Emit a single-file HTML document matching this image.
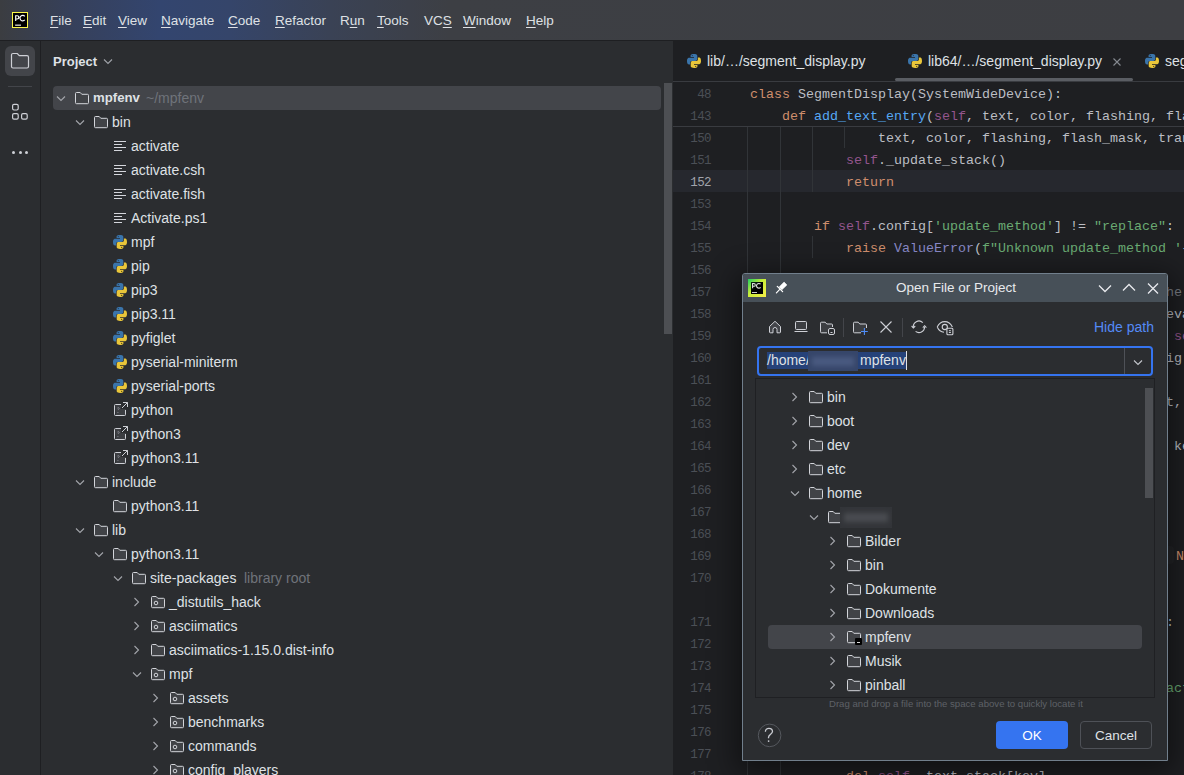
<!DOCTYPE html><html><head><meta charset="utf-8"><style>
*{margin:0;padding:0;box-sizing:border-box}
html,body{width:1184px;height:775px;overflow:hidden;background:#1e1f22;font-family:"Liberation Sans",sans-serif}
.a{position:absolute}
.ic{position:absolute;overflow:visible}
.t{position:absolute;white-space:pre;font-size:14px;color:#dfe1e5;line-height:24px;height:24px}
.mn{position:absolute;white-space:pre;font-size:13.5px;color:#dfe1e5;line-height:40px;top:1px}
.mn u{text-decoration:underline;text-underline-offset:1.5px;text-decoration-thickness:1px}
.code{position:absolute;white-space:pre;font-family:"Liberation Mono",monospace;font-size:13.33px;line-height:22px;height:22px;color:#bcbec4;padding-top:1.5px}
.ln{position:absolute;white-space:pre;font-family:"Liberation Mono",monospace;font-size:12.5px;letter-spacing:-.6px;line-height:22px;height:22px;color:#4b4f56;text-align:right;width:61px;padding-top:1px}
.kw{color:#cf8e6d}.sf{color:#94558d}.fn{color:#56a8f5}.st{color:#6aab73}.bi{color:#8888c6}.cm{color:#7a7e85}
</style></head><body>

<div class="a" style="left:0;top:0;width:1184px;height:40px;background:linear-gradient(90deg,#3b3d41 0px,#36405a 70px,#33456f 160px,#35456a 230px,#3a4255 330px,#3d3f44 450px,#3d3e42 1184px)"></div>
<div class="a" style="left:0;top:40px;width:1184px;height:1px;background:#1e1f22"></div>
<svg class="ic" style="left:12px;top:12px" width="16" height="16" viewBox="0 0 16 16"><rect x=".5" y=".5" width="15" height="15" fill="#000" stroke="#fcf84a"/><path d="M3.7 9.1V3.7h1.5a1.65 1.65 0 0 1 0 3.3H3.7M12.8 4.3A2.75 2.75 0 1 0 12.8 7.9" fill="none" stroke="#fff" stroke-width="1.15"/><rect x="3.1" y="12.6" width="5.9" height="1.1" fill="#fff"/></svg>
<div class="mn" style="left:50px"><u>F</u>ile</div>
<div class="mn" style="left:83px"><u>E</u>dit</div>
<div class="mn" style="left:118px"><u>V</u>iew</div>
<div class="mn" style="left:161px"><u>N</u>avigate</div>
<div class="mn" style="left:228px"><u>C</u>ode</div>
<div class="mn" style="left:275px"><u>R</u>efactor</div>
<div class="mn" style="left:340px">R<u>u</u>n</div>
<div class="mn" style="left:377px"><u>T</u>ools</div>
<div class="mn" style="left:424px">VC<u>S</u></div>
<div class="mn" style="left:463px"><u>W</u>indow</div>
<div class="mn" style="left:526px"><u>H</u>elp</div>
<div class="a" style="left:0;top:41px;width:40px;height:734px;background:#2b2d30"></div>
<div class="a" style="left:40px;top:41px;width:1px;height:734px;background:#1e1f22"></div>
<div class="a" style="left:5px;top:46px;width:30px;height:30px;border-radius:6px;background:#43454a"></div>
<svg class="ic" style="left:10px;top:51px" width="20" height="20" viewBox="0 0 20 20"><path d="M1.5 4a1.5 1.5 0 0 1 1.5-1.5h4.3l2 2.2H17a1.5 1.5 0 0 1 1.5 1.5v9.3a1.5 1.5 0 0 1-1.5 1.5H3a1.5 1.5 0 0 1-1.5-1.5z" fill="none" stroke="#ced0d6" stroke-width="1.2"/></svg>
<div class="a" style="left:8px;top:86px;width:24px;height:1px;background:#43454a"></div>
<svg class="ic" style="left:10px;top:102px" width="20" height="20" viewBox="0 0 20 20"><rect x="2.6" y="2.4" width="5.6" height="5.6" rx="1.4" fill="none" stroke="#ced0d6" stroke-width="1.2"/><rect x="2.6" y="11.6" width="5.6" height="5.6" rx="1.4" fill="none" stroke="#ced0d6" stroke-width="1.2"/><rect x="11.6" y="11.6" width="5.6" height="5.6" rx="1.4" fill="none" stroke="#ced0d6" stroke-width="1.2"/></svg>
<div class="a" style="left:12.0px;top:150.5px;width:3px;height:3px;border-radius:50%;background:#ced0d6"></div>
<div class="a" style="left:18.5px;top:150.5px;width:3px;height:3px;border-radius:50%;background:#ced0d6"></div>
<div class="a" style="left:25.0px;top:150.5px;width:3px;height:3px;border-radius:50%;background:#ced0d6"></div>
<div class="a" style="left:41px;top:41px;width:632px;height:734px;background:#2b2d30"></div>
<div class="t" style="left:53px;top:50px;font-weight:bold;font-size:13px">Project</div>
<svg class="ic" style="left:100px;top:53px" width="16" height="16" viewBox="0 0 16 16"><path d="M4 6.5l4 4 4-4" fill="none" stroke="#9fa2a8" stroke-width="1.1"/></svg>
<div class="a" style="left:53px;top:86px;width:608px;height:24px;border-radius:4px;background:#43454a"></div>
<div class="a" style="left:664px;top:83px;width:8px;height:251px;background:#4d4f53"></div>
<svg class="ic" style="left:53px;top:90px" width="16" height="16" viewBox="0 0 16 16"><path d="M4 6.5l4 4 4-4" fill="none" stroke="#a3a5ab" stroke-width="1.1"/></svg>
<svg class="ic" style="left:74px;top:90px" width="16" height="16" viewBox="0 0 16 16"><path d="M1.5 3.5a1 1 0 0 1 1-1h3.7l1.6 1.8h5.7a1 1 0 0 1 1 1v7.4a1 1 0 0 1-1 1h-11a1 1 0 0 1-1-1z" fill="#414347" stroke="#d3d5da" stroke-width="1"/></svg>
<div class="t" style="left:93px;top:86px;font-weight:bold;font-size:13.2px;">mpfenv</div>
<div class="t" style="left:146px;top:86px;color:#6f737a">~/mpfenv</div>
<svg class="ic" style="left:72px;top:114px" width="16" height="16" viewBox="0 0 16 16"><path d="M4 6.5l4 4 4-4" fill="none" stroke="#a3a5ab" stroke-width="1.1"/></svg>
<svg class="ic" style="left:93px;top:114px" width="16" height="16" viewBox="0 0 16 16"><path d="M1.5 3.5a1 1 0 0 1 1-1h3.7l1.6 1.8h5.7a1 1 0 0 1 1 1v7.4a1 1 0 0 1-1 1h-11a1 1 0 0 1-1-1z" fill="#414347" stroke="#d3d5da" stroke-width="1"/></svg>
<div class="t" style="left:112px;top:110px;">bin</div>
<svg class="ic" style="left:112px;top:138px" width="16" height="16" viewBox="0 0 16 16"><path d="M2 3.5h12M2 6.5h8M2 9.5h12M2 12.5h8" stroke="#d4d6dc" stroke-width="1.1"/></svg>
<div class="t" style="left:131px;top:134px;">activate</div>
<svg class="ic" style="left:112px;top:162px" width="16" height="16" viewBox="0 0 16 16"><path d="M2 3.5h12M2 6.5h8M2 9.5h12M2 12.5h8" stroke="#d4d6dc" stroke-width="1.1"/></svg>
<div class="t" style="left:131px;top:158px;">activate.csh</div>
<svg class="ic" style="left:112px;top:186px" width="16" height="16" viewBox="0 0 16 16"><path d="M2 3.5h12M2 6.5h8M2 9.5h12M2 12.5h8" stroke="#d4d6dc" stroke-width="1.1"/></svg>
<div class="t" style="left:131px;top:182px;">activate.fish</div>
<svg class="ic" style="left:112px;top:210px" width="16" height="16" viewBox="0 0 16 16"><path d="M2 3.5h12M2 6.5h8M2 9.5h12M2 12.5h8" stroke="#d4d6dc" stroke-width="1.1"/></svg>
<div class="t" style="left:131px;top:206px;">Activate.ps1</div>
<svg class="ic" style="left:112px;top:234px" width="16" height="16" viewBox="0 0 16 16"><path d="M7.9 1C4.5 1 4.6 2.5 4.6 2.5V4.1H8V4.7H3.1C3.1 4.7 1 4.5 1 8S2.8 11.4 2.8 11.4H4.1V9.7C4.1 9.7 4 7.9 5.9 7.9H9.5C9.5 7.9 11.3 7.9 11.3 6.1V2.9C11.3 2.9 11.6 1 7.9 1Z" fill="#3a74aa"/><path d="M8.1 15C11.5 15 11.4 13.5 11.4 13.5V11.9H8V11.3H12.9C12.9 11.3 15 11.5 15 8S13.2 4.6 13.2 4.6H11.9V6.3C11.9 6.3 12 8.1 10.1 8.1H6.5C6.5 8.1 4.7 8.1 4.7 9.9V13.1C4.7 13.1 4.4 15 8.1 15Z" fill="#e9c63a"/><circle cx="6.3" cy="2.6" r=".55" fill="#20344c"/><circle cx="9.7" cy="13.4" r=".55" fill="#4a3b10"/></svg>
<div class="t" style="left:131px;top:230px;">mpf</div>
<svg class="ic" style="left:112px;top:258px" width="16" height="16" viewBox="0 0 16 16"><path d="M7.9 1C4.5 1 4.6 2.5 4.6 2.5V4.1H8V4.7H3.1C3.1 4.7 1 4.5 1 8S2.8 11.4 2.8 11.4H4.1V9.7C4.1 9.7 4 7.9 5.9 7.9H9.5C9.5 7.9 11.3 7.9 11.3 6.1V2.9C11.3 2.9 11.6 1 7.9 1Z" fill="#3a74aa"/><path d="M8.1 15C11.5 15 11.4 13.5 11.4 13.5V11.9H8V11.3H12.9C12.9 11.3 15 11.5 15 8S13.2 4.6 13.2 4.6H11.9V6.3C11.9 6.3 12 8.1 10.1 8.1H6.5C6.5 8.1 4.7 8.1 4.7 9.9V13.1C4.7 13.1 4.4 15 8.1 15Z" fill="#e9c63a"/><circle cx="6.3" cy="2.6" r=".55" fill="#20344c"/><circle cx="9.7" cy="13.4" r=".55" fill="#4a3b10"/></svg>
<div class="t" style="left:131px;top:254px;">pip</div>
<svg class="ic" style="left:112px;top:282px" width="16" height="16" viewBox="0 0 16 16"><path d="M7.9 1C4.5 1 4.6 2.5 4.6 2.5V4.1H8V4.7H3.1C3.1 4.7 1 4.5 1 8S2.8 11.4 2.8 11.4H4.1V9.7C4.1 9.7 4 7.9 5.9 7.9H9.5C9.5 7.9 11.3 7.9 11.3 6.1V2.9C11.3 2.9 11.6 1 7.9 1Z" fill="#3a74aa"/><path d="M8.1 15C11.5 15 11.4 13.5 11.4 13.5V11.9H8V11.3H12.9C12.9 11.3 15 11.5 15 8S13.2 4.6 13.2 4.6H11.9V6.3C11.9 6.3 12 8.1 10.1 8.1H6.5C6.5 8.1 4.7 8.1 4.7 9.9V13.1C4.7 13.1 4.4 15 8.1 15Z" fill="#e9c63a"/><circle cx="6.3" cy="2.6" r=".55" fill="#20344c"/><circle cx="9.7" cy="13.4" r=".55" fill="#4a3b10"/></svg>
<div class="t" style="left:131px;top:278px;">pip3</div>
<svg class="ic" style="left:112px;top:306px" width="16" height="16" viewBox="0 0 16 16"><path d="M7.9 1C4.5 1 4.6 2.5 4.6 2.5V4.1H8V4.7H3.1C3.1 4.7 1 4.5 1 8S2.8 11.4 2.8 11.4H4.1V9.7C4.1 9.7 4 7.9 5.9 7.9H9.5C9.5 7.9 11.3 7.9 11.3 6.1V2.9C11.3 2.9 11.6 1 7.9 1Z" fill="#3a74aa"/><path d="M8.1 15C11.5 15 11.4 13.5 11.4 13.5V11.9H8V11.3H12.9C12.9 11.3 15 11.5 15 8S13.2 4.6 13.2 4.6H11.9V6.3C11.9 6.3 12 8.1 10.1 8.1H6.5C6.5 8.1 4.7 8.1 4.7 9.9V13.1C4.7 13.1 4.4 15 8.1 15Z" fill="#e9c63a"/><circle cx="6.3" cy="2.6" r=".55" fill="#20344c"/><circle cx="9.7" cy="13.4" r=".55" fill="#4a3b10"/></svg>
<div class="t" style="left:131px;top:302px;">pip3.11</div>
<svg class="ic" style="left:112px;top:330px" width="16" height="16" viewBox="0 0 16 16"><path d="M7.9 1C4.5 1 4.6 2.5 4.6 2.5V4.1H8V4.7H3.1C3.1 4.7 1 4.5 1 8S2.8 11.4 2.8 11.4H4.1V9.7C4.1 9.7 4 7.9 5.9 7.9H9.5C9.5 7.9 11.3 7.9 11.3 6.1V2.9C11.3 2.9 11.6 1 7.9 1Z" fill="#3a74aa"/><path d="M8.1 15C11.5 15 11.4 13.5 11.4 13.5V11.9H8V11.3H12.9C12.9 11.3 15 11.5 15 8S13.2 4.6 13.2 4.6H11.9V6.3C11.9 6.3 12 8.1 10.1 8.1H6.5C6.5 8.1 4.7 8.1 4.7 9.9V13.1C4.7 13.1 4.4 15 8.1 15Z" fill="#e9c63a"/><circle cx="6.3" cy="2.6" r=".55" fill="#20344c"/><circle cx="9.7" cy="13.4" r=".55" fill="#4a3b10"/></svg>
<div class="t" style="left:131px;top:326px;">pyfiglet</div>
<svg class="ic" style="left:112px;top:354px" width="16" height="16" viewBox="0 0 16 16"><path d="M7.9 1C4.5 1 4.6 2.5 4.6 2.5V4.1H8V4.7H3.1C3.1 4.7 1 4.5 1 8S2.8 11.4 2.8 11.4H4.1V9.7C4.1 9.7 4 7.9 5.9 7.9H9.5C9.5 7.9 11.3 7.9 11.3 6.1V2.9C11.3 2.9 11.6 1 7.9 1Z" fill="#3a74aa"/><path d="M8.1 15C11.5 15 11.4 13.5 11.4 13.5V11.9H8V11.3H12.9C12.9 11.3 15 11.5 15 8S13.2 4.6 13.2 4.6H11.9V6.3C11.9 6.3 12 8.1 10.1 8.1H6.5C6.5 8.1 4.7 8.1 4.7 9.9V13.1C4.7 13.1 4.4 15 8.1 15Z" fill="#e9c63a"/><circle cx="6.3" cy="2.6" r=".55" fill="#20344c"/><circle cx="9.7" cy="13.4" r=".55" fill="#4a3b10"/></svg>
<div class="t" style="left:131px;top:350px;">pyserial-miniterm</div>
<svg class="ic" style="left:112px;top:378px" width="16" height="16" viewBox="0 0 16 16"><path d="M7.9 1C4.5 1 4.6 2.5 4.6 2.5V4.1H8V4.7H3.1C3.1 4.7 1 4.5 1 8S2.8 11.4 2.8 11.4H4.1V9.7C4.1 9.7 4 7.9 5.9 7.9H9.5C9.5 7.9 11.3 7.9 11.3 6.1V2.9C11.3 2.9 11.6 1 7.9 1Z" fill="#3a74aa"/><path d="M8.1 15C11.5 15 11.4 13.5 11.4 13.5V11.9H8V11.3H12.9C12.9 11.3 15 11.5 15 8S13.2 4.6 13.2 4.6H11.9V6.3C11.9 6.3 12 8.1 10.1 8.1H6.5C6.5 8.1 4.7 8.1 4.7 9.9V13.1C4.7 13.1 4.4 15 8.1 15Z" fill="#e9c63a"/><circle cx="6.3" cy="2.6" r=".55" fill="#20344c"/><circle cx="9.7" cy="13.4" r=".55" fill="#4a3b10"/></svg>
<div class="t" style="left:131px;top:374px;">pyserial-ports</div>
<svg class="ic" style="left:112px;top:402px" width="16" height="16" viewBox="0 0 16 16"><path d="M3 3h6v4h5v6.5a.5.5 0 0 1-.5.5h-9a.5.5 0 0 1-.5-.5z" fill="#3c3e42"/><path d="M9 2.5H3.5a1 1 0 0 0-1 1v9a1 1 0 0 0 1 1h9a1 1 0 0 0 1-1V8" fill="none" stroke="#ced0d6" stroke-width="1"/><path d="M10 6L15.5 0.5M11 0.5h4.5V5" fill="none" stroke="#ced0d6" stroke-width="1"/><path d="M5.4 6.2c.4-.7 1.6-.7 1.8 0 .2.7-.9 1-1.1 1.8M5.9 10.2v.8" fill="none" stroke="#8c8f96" stroke-width="1"/></svg>
<div class="t" style="left:131px;top:398px;">python</div>
<svg class="ic" style="left:112px;top:426px" width="16" height="16" viewBox="0 0 16 16"><path d="M3 3h6v4h5v6.5a.5.5 0 0 1-.5.5h-9a.5.5 0 0 1-.5-.5z" fill="#3c3e42"/><path d="M9 2.5H3.5a1 1 0 0 0-1 1v9a1 1 0 0 0 1 1h9a1 1 0 0 0 1-1V8" fill="none" stroke="#ced0d6" stroke-width="1"/><path d="M10 6L15.5 0.5M11 0.5h4.5V5" fill="none" stroke="#ced0d6" stroke-width="1"/><path d="M5.4 6.2c.4-.7 1.6-.7 1.8 0 .2.7-.9 1-1.1 1.8M5.9 10.2v.8" fill="none" stroke="#8c8f96" stroke-width="1"/></svg>
<div class="t" style="left:131px;top:422px;">python3</div>
<svg class="ic" style="left:112px;top:450px" width="16" height="16" viewBox="0 0 16 16"><path d="M3 3h6v4h5v6.5a.5.5 0 0 1-.5.5h-9a.5.5 0 0 1-.5-.5z" fill="#3c3e42"/><path d="M9 2.5H3.5a1 1 0 0 0-1 1v9a1 1 0 0 0 1 1h9a1 1 0 0 0 1-1V8" fill="none" stroke="#ced0d6" stroke-width="1"/><path d="M10 6L15.5 0.5M11 0.5h4.5V5" fill="none" stroke="#ced0d6" stroke-width="1"/><path d="M5.4 6.2c.4-.7 1.6-.7 1.8 0 .2.7-.9 1-1.1 1.8M5.9 10.2v.8" fill="none" stroke="#8c8f96" stroke-width="1"/></svg>
<div class="t" style="left:131px;top:446px;">python3.11</div>
<svg class="ic" style="left:72px;top:474px" width="16" height="16" viewBox="0 0 16 16"><path d="M4 6.5l4 4 4-4" fill="none" stroke="#a3a5ab" stroke-width="1.1"/></svg>
<svg class="ic" style="left:93px;top:474px" width="16" height="16" viewBox="0 0 16 16"><path d="M1.5 3.5a1 1 0 0 1 1-1h3.7l1.6 1.8h5.7a1 1 0 0 1 1 1v7.4a1 1 0 0 1-1 1h-11a1 1 0 0 1-1-1z" fill="#414347" stroke="#d3d5da" stroke-width="1"/></svg>
<div class="t" style="left:112px;top:470px;">include</div>
<svg class="ic" style="left:112px;top:498px" width="16" height="16" viewBox="0 0 16 16"><path d="M1.5 3.5a1 1 0 0 1 1-1h3.7l1.6 1.8h5.7a1 1 0 0 1 1 1v7.4a1 1 0 0 1-1 1h-11a1 1 0 0 1-1-1z" fill="#414347" stroke="#d3d5da" stroke-width="1"/></svg>
<div class="t" style="left:131px;top:494px;">python3.11</div>
<svg class="ic" style="left:72px;top:522px" width="16" height="16" viewBox="0 0 16 16"><path d="M4 6.5l4 4 4-4" fill="none" stroke="#a3a5ab" stroke-width="1.1"/></svg>
<svg class="ic" style="left:93px;top:522px" width="16" height="16" viewBox="0 0 16 16"><path d="M1.5 3.5a1 1 0 0 1 1-1h3.7l1.6 1.8h5.7a1 1 0 0 1 1 1v7.4a1 1 0 0 1-1 1h-11a1 1 0 0 1-1-1z" fill="#414347" stroke="#d3d5da" stroke-width="1"/></svg>
<div class="t" style="left:112px;top:518px;">lib</div>
<svg class="ic" style="left:91px;top:546px" width="16" height="16" viewBox="0 0 16 16"><path d="M4 6.5l4 4 4-4" fill="none" stroke="#a3a5ab" stroke-width="1.1"/></svg>
<svg class="ic" style="left:112px;top:546px" width="16" height="16" viewBox="0 0 16 16"><path d="M1.5 3.5a1 1 0 0 1 1-1h3.7l1.6 1.8h5.7a1 1 0 0 1 1 1v7.4a1 1 0 0 1-1 1h-11a1 1 0 0 1-1-1z" fill="#414347" stroke="#d3d5da" stroke-width="1"/></svg>
<div class="t" style="left:131px;top:542px;">python3.11</div>
<svg class="ic" style="left:110px;top:570px" width="16" height="16" viewBox="0 0 16 16"><path d="M4 6.5l4 4 4-4" fill="none" stroke="#a3a5ab" stroke-width="1.1"/></svg>
<svg class="ic" style="left:131px;top:570px" width="16" height="16" viewBox="0 0 16 16"><path d="M1.5 3.5a1 1 0 0 1 1-1h3.7l1.6 1.8h5.7a1 1 0 0 1 1 1v7.4a1 1 0 0 1-1 1h-11a1 1 0 0 1-1-1z" fill="#414347" stroke="#d3d5da" stroke-width="1"/></svg>
<div class="t" style="left:150px;top:566px;">site-packages</div>
<div class="t" style="left:244px;top:566px;color:#6f737a">library root</div>
<svg class="ic" style="left:128px;top:594px" width="16" height="16" viewBox="0 0 16 16"><path d="M6.5 4l4 4-4 4" fill="none" stroke="#a3a5ab" stroke-width="1.1"/></svg>
<svg class="ic" style="left:150px;top:594px" width="16" height="16" viewBox="0 0 16 16"><path d="M1.5 3.5a1 1 0 0 1 1-1h3.7l1.6 1.8h5.7a1 1 0 0 1 1 1v7.4a1 1 0 0 1-1 1h-11a1 1 0 0 1-1-1z" fill="#414347" stroke="#d3d5da" stroke-width="1"/><circle cx="6" cy="9" r="1.8" fill="none" stroke="#d3d5da" stroke-width="1"/></svg>
<div class="t" style="left:169px;top:590px;">_distutils_hack</div>
<svg class="ic" style="left:128px;top:618px" width="16" height="16" viewBox="0 0 16 16"><path d="M6.5 4l4 4-4 4" fill="none" stroke="#a3a5ab" stroke-width="1.1"/></svg>
<svg class="ic" style="left:150px;top:618px" width="16" height="16" viewBox="0 0 16 16"><path d="M1.5 3.5a1 1 0 0 1 1-1h3.7l1.6 1.8h5.7a1 1 0 0 1 1 1v7.4a1 1 0 0 1-1 1h-11a1 1 0 0 1-1-1z" fill="#414347" stroke="#d3d5da" stroke-width="1"/><circle cx="6" cy="9" r="1.8" fill="none" stroke="#d3d5da" stroke-width="1"/></svg>
<div class="t" style="left:169px;top:614px;">asciimatics</div>
<svg class="ic" style="left:128px;top:642px" width="16" height="16" viewBox="0 0 16 16"><path d="M6.5 4l4 4-4 4" fill="none" stroke="#a3a5ab" stroke-width="1.1"/></svg>
<svg class="ic" style="left:150px;top:642px" width="16" height="16" viewBox="0 0 16 16"><path d="M1.5 3.5a1 1 0 0 1 1-1h3.7l1.6 1.8h5.7a1 1 0 0 1 1 1v7.4a1 1 0 0 1-1 1h-11a1 1 0 0 1-1-1z" fill="#414347" stroke="#d3d5da" stroke-width="1"/></svg>
<div class="t" style="left:169px;top:638px;">asciimatics-1.15.0.dist-info</div>
<svg class="ic" style="left:129px;top:666px" width="16" height="16" viewBox="0 0 16 16"><path d="M4 6.5l4 4 4-4" fill="none" stroke="#a3a5ab" stroke-width="1.1"/></svg>
<svg class="ic" style="left:150px;top:666px" width="16" height="16" viewBox="0 0 16 16"><path d="M1.5 3.5a1 1 0 0 1 1-1h3.7l1.6 1.8h5.7a1 1 0 0 1 1 1v7.4a1 1 0 0 1-1 1h-11a1 1 0 0 1-1-1z" fill="#414347" stroke="#d3d5da" stroke-width="1"/><circle cx="6" cy="9" r="1.8" fill="none" stroke="#d3d5da" stroke-width="1"/></svg>
<div class="t" style="left:169px;top:662px;">mpf</div>
<svg class="ic" style="left:147px;top:690px" width="16" height="16" viewBox="0 0 16 16"><path d="M6.5 4l4 4-4 4" fill="none" stroke="#a3a5ab" stroke-width="1.1"/></svg>
<svg class="ic" style="left:169px;top:690px" width="16" height="16" viewBox="0 0 16 16"><path d="M1.5 3.5a1 1 0 0 1 1-1h3.7l1.6 1.8h5.7a1 1 0 0 1 1 1v7.4a1 1 0 0 1-1 1h-11a1 1 0 0 1-1-1z" fill="#414347" stroke="#d3d5da" stroke-width="1"/><circle cx="6" cy="9" r="1.8" fill="none" stroke="#d3d5da" stroke-width="1"/></svg>
<div class="t" style="left:188px;top:686px;">assets</div>
<svg class="ic" style="left:147px;top:714px" width="16" height="16" viewBox="0 0 16 16"><path d="M6.5 4l4 4-4 4" fill="none" stroke="#a3a5ab" stroke-width="1.1"/></svg>
<svg class="ic" style="left:169px;top:714px" width="16" height="16" viewBox="0 0 16 16"><path d="M1.5 3.5a1 1 0 0 1 1-1h3.7l1.6 1.8h5.7a1 1 0 0 1 1 1v7.4a1 1 0 0 1-1 1h-11a1 1 0 0 1-1-1z" fill="#414347" stroke="#d3d5da" stroke-width="1"/><circle cx="6" cy="9" r="1.8" fill="none" stroke="#d3d5da" stroke-width="1"/></svg>
<div class="t" style="left:188px;top:710px;">benchmarks</div>
<svg class="ic" style="left:147px;top:738px" width="16" height="16" viewBox="0 0 16 16"><path d="M6.5 4l4 4-4 4" fill="none" stroke="#a3a5ab" stroke-width="1.1"/></svg>
<svg class="ic" style="left:169px;top:738px" width="16" height="16" viewBox="0 0 16 16"><path d="M1.5 3.5a1 1 0 0 1 1-1h3.7l1.6 1.8h5.7a1 1 0 0 1 1 1v7.4a1 1 0 0 1-1 1h-11a1 1 0 0 1-1-1z" fill="#414347" stroke="#d3d5da" stroke-width="1"/><circle cx="6" cy="9" r="1.8" fill="none" stroke="#d3d5da" stroke-width="1"/></svg>
<div class="t" style="left:188px;top:734px;">commands</div>
<svg class="ic" style="left:147px;top:762px" width="16" height="16" viewBox="0 0 16 16"><path d="M6.5 4l4 4-4 4" fill="none" stroke="#a3a5ab" stroke-width="1.1"/></svg>
<svg class="ic" style="left:169px;top:762px" width="16" height="16" viewBox="0 0 16 16"><path d="M1.5 3.5a1 1 0 0 1 1-1h3.7l1.6 1.8h5.7a1 1 0 0 1 1 1v7.4a1 1 0 0 1-1 1h-11a1 1 0 0 1-1-1z" fill="#414347" stroke="#d3d5da" stroke-width="1"/><circle cx="6" cy="9" r="1.8" fill="none" stroke="#d3d5da" stroke-width="1"/></svg>
<div class="t" style="left:188px;top:758px;">config_players</div>
<div class="a" style="left:673px;top:41px;width:511px;height:734px;background:#1e1f22"></div>
<svg class="ic" style="left:686px;top:53px" width="16" height="16" viewBox="0 0 16 16"><path d="M7.9 1C4.5 1 4.6 2.5 4.6 2.5V4.1H8V4.7H3.1C3.1 4.7 1 4.5 1 8S2.8 11.4 2.8 11.4H4.1V9.7C4.1 9.7 4 7.9 5.9 7.9H9.5C9.5 7.9 11.3 7.9 11.3 6.1V2.9C11.3 2.9 11.6 1 7.9 1Z" fill="#3a74aa"/><path d="M8.1 15C11.5 15 11.4 13.5 11.4 13.5V11.9H8V11.3H12.9C12.9 11.3 15 11.5 15 8S13.2 4.6 13.2 4.6H11.9V6.3C11.9 6.3 12 8.1 10.1 8.1H6.5C6.5 8.1 4.7 8.1 4.7 9.9V13.1C4.7 13.1 4.4 15 8.1 15Z" fill="#e9c63a"/><circle cx="6.3" cy="2.6" r=".55" fill="#20344c"/><circle cx="9.7" cy="13.4" r=".55" fill="#4a3b10"/></svg>
<div class="t" style="left:707px;top:49px;color:#dfe1e5">lib/…/segment_display.py</div>
<svg class="ic" style="left:907px;top:53px" width="16" height="16" viewBox="0 0 16 16"><path d="M7.9 1C4.5 1 4.6 2.5 4.6 2.5V4.1H8V4.7H3.1C3.1 4.7 1 4.5 1 8S2.8 11.4 2.8 11.4H4.1V9.7C4.1 9.7 4 7.9 5.9 7.9H9.5C9.5 7.9 11.3 7.9 11.3 6.1V2.9C11.3 2.9 11.6 1 7.9 1Z" fill="#3a74aa"/><path d="M8.1 15C11.5 15 11.4 13.5 11.4 13.5V11.9H8V11.3H12.9C12.9 11.3 15 11.5 15 8S13.2 4.6 13.2 4.6H11.9V6.3C11.9 6.3 12 8.1 10.1 8.1H6.5C6.5 8.1 4.7 8.1 4.7 9.9V13.1C4.7 13.1 4.4 15 8.1 15Z" fill="#e9c63a"/><circle cx="6.3" cy="2.6" r=".55" fill="#20344c"/><circle cx="9.7" cy="13.4" r=".55" fill="#4a3b10"/></svg>
<div class="t" style="left:928px;top:49px;color:#dfe1e5">lib64/…/segment_display.py</div>
<svg class="ic" style="left:1109px;top:54px" width="16" height="16" viewBox="0 0 16 16"><path d="M4.5 4.5l7 7M11.5 4.5l-7 7" stroke="#868a91" stroke-width="1.1"/></svg>
<svg class="ic" style="left:1144px;top:53px" width="16" height="16" viewBox="0 0 16 16"><path d="M7.9 1C4.5 1 4.6 2.5 4.6 2.5V4.1H8V4.7H3.1C3.1 4.7 1 4.5 1 8S2.8 11.4 2.8 11.4H4.1V9.7C4.1 9.7 4 7.9 5.9 7.9H9.5C9.5 7.9 11.3 7.9 11.3 6.1V2.9C11.3 2.9 11.6 1 7.9 1Z" fill="#3a74aa"/><path d="M8.1 15C11.5 15 11.4 13.5 11.4 13.5V11.9H8V11.3H12.9C12.9 11.3 15 11.5 15 8S13.2 4.6 13.2 4.6H11.9V6.3C11.9 6.3 12 8.1 10.1 8.1H6.5C6.5 8.1 4.7 8.1 4.7 9.9V13.1C4.7 13.1 4.4 15 8.1 15Z" fill="#e9c63a"/><circle cx="6.3" cy="2.6" r=".55" fill="#20344c"/><circle cx="9.7" cy="13.4" r=".55" fill="#4a3b10"/></svg>
<div class="t" style="left:1165px;top:49px;color:#dfe1e5">segment_display.py</div>
<div class="a" style="left:673px;top:81px;width:511px;height:1px;background:#393b40"></div>
<div class="a" style="left:895px;top:78px;width:238px;height:3px;border-radius:2px;background:#5a5d63"></div>
<div class="ln" style="left:650px;top:83px">48</div>
<div class="code" style="left:750px;top:82px"><span class="kw">class</span> SegmentDisplay(SystemWideDevice):</div>
<div class="ln" style="left:650px;top:105px">143</div>
<div class="code" style="left:750px;top:104px">    <span class="kw">def</span> <span class="fn">add_text_entry</span>(<span class="sf">self</span>, text, color, flashing, flash_mask, transition</div>
<div class="a" style="left:673px;top:126px;width:511px;height:1px;background:#393b40"></div>
<div class="a" style="left:673px;top:170px;width:511px;height:22px;background:#26282e"></div>
<div class="a" style="left:747px;top:127px;width:1px;height:648px;background:#313438"></div>
<div class="a" style="left:780px;top:127px;width:1px;height:648px;background:#313438"></div>
<div class="a" style="left:812px;top:127px;width:1px;height:65px;background:#313438"></div>
<div class="a" style="left:812px;top:236px;width:1px;height:22px;background:#313438"></div>
<div class="a" style="left:844px;top:127px;width:1px;height:21px;background:#313438"></div>
<div class="ln" style="left:650px;top:127px;">150</div>
<div class="code" style="left:750px;top:126px">                text, color, flashing, flash_mask, transition</div>
<div class="ln" style="left:650px;top:149px;">151</div>
<div class="code" style="left:750px;top:148px">            <span class="sf">self</span>._update_stack()</div>
<div class="ln" style="left:650px;top:171px;color:#a1a3ab;">152</div>
<div class="code" style="left:750px;top:170px">            <span class="kw">return</span></div>
<div class="ln" style="left:650px;top:193px;">153</div>
<div class="code" style="left:750px;top:192px"></div>
<div class="ln" style="left:650px;top:215px;">154</div>
<div class="code" style="left:750px;top:214px">        <span class="kw">if</span> <span class="sf">self</span>.config[<span class="st">'update_method'</span>] != <span class="st">"replace"</span>:</div>
<div class="ln" style="left:650px;top:237px;">155</div>
<div class="code" style="left:750px;top:236px">            <span class="kw">raise</span> <span class="bi">ValueError</span>(<span class="st">f"Unknown update_method '</span>{</div>
<div class="ln" style="left:650px;top:259px;">156</div>
<div class="code" style="left:750px;top:258px"></div>
<div class="ln" style="left:650px;top:281px;">157</div>
<div class="code" style="left:750px;top:280px">                                                   <span class="cm">the</span></div>
<div class="ln" style="left:650px;top:303px;">158</div>
<div class="code" style="left:750px;top:302px">                                                    eval</div>
<div class="ln" style="left:650px;top:325px;">159</div>
<div class="code" style="left:750px;top:324px">                                                     <span class="sf">self</span></div>
<div class="ln" style="left:650px;top:347px;">160</div>
<div class="code" style="left:750px;top:346px">                                                    ig</div>
<div class="ln" style="left:650px;top:369px;">161</div>
<div class="code" style="left:750px;top:368px"></div>
<div class="ln" style="left:650px;top:391px;">162</div>
<div class="code" style="left:750px;top:390px">                                                    t,</div>
<div class="ln" style="left:650px;top:413px;">163</div>
<div class="code" style="left:750px;top:412px"></div>
<div class="ln" style="left:650px;top:435px;">164</div>
<div class="code" style="left:750px;top:434px">                                                     key</div>
<div class="ln" style="left:650px;top:457px;">165</div>
<div class="code" style="left:750px;top:456px"></div>
<div class="ln" style="left:650px;top:479px;">166</div>
<div class="code" style="left:750px;top:478px"></div>
<div class="ln" style="left:650px;top:501px;">167</div>
<div class="code" style="left:750px;top:500px"></div>
<div class="ln" style="left:650px;top:523px;">168</div>
<div class="code" style="left:750px;top:522px"></div>
<div class="ln" style="left:650px;top:545px;">169</div>
<div class="code" style="left:750px;top:544px"></div>
<div class="ln" style="left:650px;top:567px;">170</div>
<div class="code" style="left:750px;top:566px"></div>
<div class="ln" style="left:650px;top:611px;">171</div>
<div class="code" style="left:750px;top:610px">                                                    :</div>
<div class="ln" style="left:650px;top:633px;">172</div>
<div class="code" style="left:750px;top:632px"></div>
<div class="ln" style="left:650px;top:655px;">173</div>
<div class="code" style="left:750px;top:654px"></div>
<div class="ln" style="left:650px;top:677px;">174</div>
<div class="code" style="left:750px;top:676px">                                                    <span class="st">act</span></div>
<div class="ln" style="left:650px;top:699px;">175</div>
<div class="code" style="left:750px;top:698px"></div>
<div class="ln" style="left:650px;top:721px;">176</div>
<div class="code" style="left:750px;top:720px"></div>
<div class="ln" style="left:650px;top:743px;">177</div>
<div class="code" style="left:750px;top:742px"></div>
<div class="ln" style="left:650px;top:765px;">178</div>
<div class="code" style="left:750px;top:764px">            <span class="kw">del</span> <span class="sf">self</span>._text_stack[key]</div>
<div class="a" style="left:1160px;top:546px;width:14px;height:18px;border-radius:4px;background:#232427"></div>
<div class="code" style="left:1176px;top:544px"><span class="kw">None</span></div>
<div class="a" style="left:742px;top:273px;width:426px;height:488px;background:#2b2d30;border:1px solid #717f8c;border-radius:3px 3px 0 0;box-shadow:0 6px 28px 6px rgba(0,0,0,0.45)"></div>
<div class="a" style="left:743px;top:274px;width:424px;height:28px;background:#475058;border-radius:2px 2px 0 0"></div>
<svg class="ic" style="left:748px;top:279px" width="18" height="18" viewBox="0 0 18 18"><defs><linearGradient id="pcg" x1="0" y1="0" x2="1" y2="1"><stop offset="0" stop-color="#1fd060"/><stop offset=".45" stop-color="#c8ec38"/><stop offset="1" stop-color="#f6ee48"/></linearGradient><linearGradient id="pci" x1="0" y1="0" x2="1" y2="1"><stop offset="0" stop-color="#0a2a10"/><stop offset=".5" stop-color="#000"/></linearGradient></defs><rect x="0" y="0" width="18" height="18" fill="url(#pcg)"/><rect x="3" y="3" width="12" height="12" fill="url(#pci)"/><path d="M4.6 9.3V4.5h1.3a1.4 1.4 0 0 1 0 2.8H4.6M12.6 5.2A2.35 2.35 0 1 0 12.6 8.4" fill="none" stroke="#e0e2e0" stroke-width="1.1"/><rect x="4" y="13" width="5" height="1" fill="#ccc"/></svg>
<svg class="ic" style="left:772px;top:278px" width="20" height="20" viewBox="0 0 20 20"><path d="M12.1 4.1L14.9 6.9 9.9 11.7 7.2 8.9z" fill="#fff" stroke="#fff" stroke-width=".6" stroke-linejoin="round"/><path d="M5.3 8.4L10.6 13.6" stroke="#fff" stroke-width="1.3" stroke-linecap="round"/><path d="M8 11.2L4.4 14.8" stroke="#fff" stroke-width="1.2" stroke-linecap="round"/></svg>
<div class="a" style="left:743px;top:276px;width:426px;text-align:center;font-size:13.5px;line-height:24px;color:#e8eaed">Open File or Project</div>
<svg class="ic" style="left:1096px;top:280px" width="18" height="16" viewBox="0 0 18 16"><path d="M3 5.5l6 6 6-6" fill="none" stroke="#e8eaed" stroke-width="1.3"/></svg>
<svg class="ic" style="left:1120px;top:279px" width="18" height="16" viewBox="0 0 18 16"><path d="M3 11.5l6-6 6 6" fill="none" stroke="#e8eaed" stroke-width="1.3"/></svg>
<svg class="ic" style="left:1144px;top:279px" width="18" height="18" viewBox="0 0 18 18"><path d="M4 4.5l10 10M14 4.5l-10 10" fill="none" stroke="#e8eaed" stroke-width="1.3"/></svg>
<svg class="ic" style="left:767px;top:319px" width="16" height="16" viewBox="0 0 16 16"><path d="M2.5 7.5L8 2.3l5.5 5.2V13a.8.8 0 0 1-.8.8H10V10.5a2 2 0 0 0-4 0v3.3H3.3a.8.8 0 0 1-.8-.8z" fill="#43454a" stroke="#ced0d6" stroke-width="1"/></svg>
<svg class="ic" style="left:793px;top:319px" width="16" height="16" viewBox="0 0 16 16"><rect x="2.5" y="2.5" width="11" height="8" rx="1" fill="#3c3e42" stroke="#ced0d6"/><path d="M1.5 12.5h13" stroke="#ced0d6"/></svg>
<svg class="ic" style="left:819px;top:319px" width="18" height="18" viewBox="0 0 18 18"><path d="M13.5 8V6a1 1 0 0 0-1-1H7.8L6.2 3.2H2.5a1 1 0 0 0-1 1v8.6a1 1 0 0 0 1 1H8" fill="#3c3e42" stroke="#ced0d6"/><rect x="9.5" y="9.5" width="6" height="6" rx="1.5" fill="#2b2d30" stroke="#ced0d6"/><path d="M11.5 13.5h2" stroke="#ced0d6"/></svg>
<div class="a" style="left:843px;top:318px;width:1px;height:19px;background:#43454a"></div>
<svg class="ic" style="left:852px;top:319px" width="18" height="18" viewBox="0 0 18 18"><path d="M14.5 9V6a1 1 0 0 0-1-1H7.8L6.2 3.2H2.5a1 1 0 0 0-1 1v8.6a1 1 0 0 0 1 1H9" fill="#3c3e42" stroke="#ced0d6"/><path d="M12.4 9.1v6.8M9 12.5h6.8" stroke="#4f8df8" stroke-width="1.1"/></svg>
<svg class="ic" style="left:878px;top:319px" width="16" height="16" viewBox="0 0 16 16"><path d="M2.5 2.5l11 11M13.5 2.5l-11 11" stroke="#ced0d6" stroke-width="1.1"/></svg>
<div class="a" style="left:902px;top:318px;width:1px;height:19px;background:#43454a"></div>
<svg class="ic" style="left:910px;top:319px" width="18" height="18" viewBox="0 0 18 18"><path d="M3.4 8.6A5.6 5.6 0 0 1 12.8 3.6M5.6 12.4A5.6 5.6 0 0 0 14.6 8" fill="none" stroke="#ced0d6" stroke-width="1.1"/><path d="M1.6 7L3.4 8.9 5.2 7M12.8 8.6L14.6 6.7 16.4 8.6" fill="none" stroke="#ced0d6" stroke-width="1.1"/></svg>
<svg class="ic" style="left:936px;top:319px" width="18" height="18" viewBox="0 0 18 18"><path d="M1.2 8C2.8 4.7 5.5 2.6 8.8 2.6S14.8 4.7 16.4 8M1.2 8c1.5 3.2 3.8 5 6.8 5.3" fill="none" stroke="#ced0d6" stroke-width="1.1"/><circle cx="8.8" cy="8" r="2.6" fill="none" stroke="#ced0d6" stroke-width="1.1"/><rect x="10.9" y="9.3" width="6" height="6.5" rx="1" fill="#2b2d30" stroke="#ced0d6" stroke-width="1.1"/><path d="M12.9 11.7h2M12.9 13.5h2" stroke="#ced0d6" stroke-width="1"/></svg>
<div class="t" style="left:1094px;top:315px;color:#548af7">Hide path</div>
<div class="a" style="left:757px;top:346px;width:396px;height:30px;border:2px solid #3574f0;border-radius:4px;background:#2b2d30"></div>
<div class="a" style="left:1124px;top:348px;width:1px;height:26px;background:#4e5157"></div>
<svg class="ic" style="left:1130px;top:354px" width="16" height="16" viewBox="0 0 16 16"><path d="M4 6.5l4 4 4-4" fill="none" stroke="#c4c6cc" stroke-width="1.1"/></svg>
<div class="a" style="left:767px;top:352px;width:139px;height:17px;background:#264279"></div>
<div class="t" style="left:767px;top:348px;color:#dfe1e5">/home/</div>
<div class="a" style="left:808px;top:351px;width:50px;height:20px;background:#36466a;overflow:hidden"><div class="a" style="left:4px;top:6px;width:42px;height:9px;background:#4a5a80;filter:blur(2.5px)"></div></div>
<div class="t" style="left:860px;top:348px;color:#dfe1e5">mpfenv</div>
<div class="a" style="left:906px;top:351px;width:1px;height:19px;background:#dfe1e5"></div>
<div class="a" style="left:755px;top:378px;width:400px;height:320px;border:1px solid #1f2023;background:#2b2d30"></div>
<div class="a" style="left:1145px;top:388px;width:8px;height:110px;background:#4d4f53"></div>
<div class="a" style="left:768px;top:625px;width:374px;height:24px;border-radius:4px;background:#43454a"></div>
<svg class="ic" style="left:786px;top:389px" width="16" height="16" viewBox="0 0 16 16"><path d="M6.5 4l4 4-4 4" fill="none" stroke="#a3a5ab" stroke-width="1.1"/></svg>
<svg class="ic" style="left:808px;top:389px" width="16" height="16" viewBox="0 0 16 16"><path d="M1.5 3.5a1 1 0 0 1 1-1h3.7l1.6 1.8h5.7a1 1 0 0 1 1 1v7.4a1 1 0 0 1-1 1h-11a1 1 0 0 1-1-1z" fill="#414347" stroke="#d3d5da" stroke-width="1"/></svg>
<div class="t" style="left:827px;top:385px">bin</div>
<svg class="ic" style="left:786px;top:413px" width="16" height="16" viewBox="0 0 16 16"><path d="M6.5 4l4 4-4 4" fill="none" stroke="#a3a5ab" stroke-width="1.1"/></svg>
<svg class="ic" style="left:808px;top:413px" width="16" height="16" viewBox="0 0 16 16"><path d="M1.5 3.5a1 1 0 0 1 1-1h3.7l1.6 1.8h5.7a1 1 0 0 1 1 1v7.4a1 1 0 0 1-1 1h-11a1 1 0 0 1-1-1z" fill="#414347" stroke="#d3d5da" stroke-width="1"/></svg>
<div class="t" style="left:827px;top:409px">boot</div>
<svg class="ic" style="left:786px;top:437px" width="16" height="16" viewBox="0 0 16 16"><path d="M6.5 4l4 4-4 4" fill="none" stroke="#a3a5ab" stroke-width="1.1"/></svg>
<svg class="ic" style="left:808px;top:437px" width="16" height="16" viewBox="0 0 16 16"><path d="M1.5 3.5a1 1 0 0 1 1-1h3.7l1.6 1.8h5.7a1 1 0 0 1 1 1v7.4a1 1 0 0 1-1 1h-11a1 1 0 0 1-1-1z" fill="#414347" stroke="#d3d5da" stroke-width="1"/></svg>
<div class="t" style="left:827px;top:433px">dev</div>
<svg class="ic" style="left:786px;top:461px" width="16" height="16" viewBox="0 0 16 16"><path d="M6.5 4l4 4-4 4" fill="none" stroke="#a3a5ab" stroke-width="1.1"/></svg>
<svg class="ic" style="left:808px;top:461px" width="16" height="16" viewBox="0 0 16 16"><path d="M1.5 3.5a1 1 0 0 1 1-1h3.7l1.6 1.8h5.7a1 1 0 0 1 1 1v7.4a1 1 0 0 1-1 1h-11a1 1 0 0 1-1-1z" fill="#414347" stroke="#d3d5da" stroke-width="1"/></svg>
<div class="t" style="left:827px;top:457px">etc</div>
<svg class="ic" style="left:787px;top:485px" width="16" height="16" viewBox="0 0 16 16"><path d="M4 6.5l4 4 4-4" fill="none" stroke="#a3a5ab" stroke-width="1.1"/></svg>
<svg class="ic" style="left:808px;top:485px" width="16" height="16" viewBox="0 0 16 16"><path d="M1.5 3.5a1 1 0 0 1 1-1h3.7l1.6 1.8h5.7a1 1 0 0 1 1 1v7.4a1 1 0 0 1-1 1h-11a1 1 0 0 1-1-1z" fill="#414347" stroke="#d3d5da" stroke-width="1"/></svg>
<div class="t" style="left:827px;top:481px">home</div>
<svg class="ic" style="left:806px;top:509px" width="16" height="16" viewBox="0 0 16 16"><path d="M4 6.5l4 4 4-4" fill="none" stroke="#a3a5ab" stroke-width="1.1"/></svg>
<svg class="ic" style="left:827px;top:509px" width="16" height="16" viewBox="0 0 16 16"><path d="M1.5 3.5a1 1 0 0 1 1-1h3.7l1.6 1.8h5.7a1 1 0 0 1 1 1v7.4a1 1 0 0 1-1 1h-11a1 1 0 0 1-1-1z" fill="#414347" stroke="#d3d5da" stroke-width="1"/></svg>
<div class="a" style="left:840px;top:507px;width:52px;height:21px;background:#333539;overflow:hidden"><div class="a" style="left:4px;top:6px;width:44px;height:9px;background:#4a4c51;filter:blur(2.5px)"></div></div>
<svg class="ic" style="left:824px;top:533px" width="16" height="16" viewBox="0 0 16 16"><path d="M6.5 4l4 4-4 4" fill="none" stroke="#a3a5ab" stroke-width="1.1"/></svg>
<svg class="ic" style="left:846px;top:533px" width="16" height="16" viewBox="0 0 16 16"><path d="M1.5 3.5a1 1 0 0 1 1-1h3.7l1.6 1.8h5.7a1 1 0 0 1 1 1v7.4a1 1 0 0 1-1 1h-11a1 1 0 0 1-1-1z" fill="#414347" stroke="#d3d5da" stroke-width="1"/></svg>
<div class="t" style="left:865px;top:529px">Bilder</div>
<svg class="ic" style="left:824px;top:557px" width="16" height="16" viewBox="0 0 16 16"><path d="M6.5 4l4 4-4 4" fill="none" stroke="#a3a5ab" stroke-width="1.1"/></svg>
<svg class="ic" style="left:846px;top:557px" width="16" height="16" viewBox="0 0 16 16"><path d="M1.5 3.5a1 1 0 0 1 1-1h3.7l1.6 1.8h5.7a1 1 0 0 1 1 1v7.4a1 1 0 0 1-1 1h-11a1 1 0 0 1-1-1z" fill="#414347" stroke="#d3d5da" stroke-width="1"/></svg>
<div class="t" style="left:865px;top:553px">bin</div>
<svg class="ic" style="left:824px;top:581px" width="16" height="16" viewBox="0 0 16 16"><path d="M6.5 4l4 4-4 4" fill="none" stroke="#a3a5ab" stroke-width="1.1"/></svg>
<svg class="ic" style="left:846px;top:581px" width="16" height="16" viewBox="0 0 16 16"><path d="M1.5 3.5a1 1 0 0 1 1-1h3.7l1.6 1.8h5.7a1 1 0 0 1 1 1v7.4a1 1 0 0 1-1 1h-11a1 1 0 0 1-1-1z" fill="#414347" stroke="#d3d5da" stroke-width="1"/></svg>
<div class="t" style="left:865px;top:577px">Dokumente</div>
<svg class="ic" style="left:824px;top:605px" width="16" height="16" viewBox="0 0 16 16"><path d="M6.5 4l4 4-4 4" fill="none" stroke="#a3a5ab" stroke-width="1.1"/></svg>
<svg class="ic" style="left:846px;top:605px" width="16" height="16" viewBox="0 0 16 16"><path d="M1.5 3.5a1 1 0 0 1 1-1h3.7l1.6 1.8h5.7a1 1 0 0 1 1 1v7.4a1 1 0 0 1-1 1h-11a1 1 0 0 1-1-1z" fill="#414347" stroke="#d3d5da" stroke-width="1"/></svg>
<div class="t" style="left:865px;top:601px">Downloads</div>
<svg class="ic" style="left:824px;top:629px" width="16" height="16" viewBox="0 0 16 16"><path d="M6.5 4l4 4-4 4" fill="none" stroke="#a3a5ab" stroke-width="1.1"/></svg>
<svg class="ic" style="left:846px;top:629px" width="16" height="16" viewBox="0 0 16 16"><path d="M1.5 3.5a1 1 0 0 1 1-1h3.7l1.6 1.8h5.7a1 1 0 0 1 1 1v7.4a1 1 0 0 1-1 1h-11a1 1 0 0 1-1-1z" fill="#414347" stroke="#d3d5da" stroke-width="1"/></svg>
<div class="t" style="left:865px;top:625px">mpfenv</div>
<div class="a" style="left:855px;top:638px;width:7px;height:7px;background:#000;border-radius:1px"></div>
<div class="a" style="left:857px;top:642px;width:3px;height:1px;background:#ddd"></div>
<svg class="ic" style="left:824px;top:653px" width="16" height="16" viewBox="0 0 16 16"><path d="M6.5 4l4 4-4 4" fill="none" stroke="#a3a5ab" stroke-width="1.1"/></svg>
<svg class="ic" style="left:846px;top:653px" width="16" height="16" viewBox="0 0 16 16"><path d="M1.5 3.5a1 1 0 0 1 1-1h3.7l1.6 1.8h5.7a1 1 0 0 1 1 1v7.4a1 1 0 0 1-1 1h-11a1 1 0 0 1-1-1z" fill="#414347" stroke="#d3d5da" stroke-width="1"/></svg>
<div class="t" style="left:865px;top:649px">Musik</div>
<svg class="ic" style="left:824px;top:677px" width="16" height="16" viewBox="0 0 16 16"><path d="M6.5 4l4 4-4 4" fill="none" stroke="#a3a5ab" stroke-width="1.1"/></svg>
<svg class="ic" style="left:846px;top:677px" width="16" height="16" viewBox="0 0 16 16"><path d="M1.5 3.5a1 1 0 0 1 1-1h3.7l1.6 1.8h5.7a1 1 0 0 1 1 1v7.4a1 1 0 0 1-1 1h-11a1 1 0 0 1-1-1z" fill="#414347" stroke="#d3d5da" stroke-width="1"/></svg>
<div class="t" style="left:865px;top:673px">pinball</div>
<div class="a" style="left:829px;top:694px;font-size:9.6px;line-height:20px;color:#5e6167;white-space:pre">Drag and drop a file into the space above to quickly locate it</div>
<svg class="ic" style="left:750px;top:715px" width="40" height="40" viewBox="0 0 40 40"><circle cx="19.6" cy="20.4" r="11.3" fill="none" stroke="#55585e" stroke-width="1"/><path d="M15.4 16.8C15.4 14.6 17 13.3 18.9 13.3C21 13.3 22.5 14.6 22.5 16.5C22.5 19 18.5 19.6 18.5 22.4V23.2" fill="none" stroke="#c9cbd1" stroke-width="1.3"/><circle cx="18.6" cy="26.1" r=".85" fill="#c9cbd1"/></svg>
<div class="a" style="left:996px;top:721px;width:72px;height:28px;border-radius:4px;background:#3574f0;text-align:center;font-size:13.5px;line-height:29px;color:#fff">OK</div>
<div class="a" style="left:1080px;top:721px;width:72px;height:28px;border-radius:4px;border:1px solid #4e5157;text-align:center;font-size:13.5px;line-height:27px;color:#dfe1e5">Cancel</div>
</body></html>
